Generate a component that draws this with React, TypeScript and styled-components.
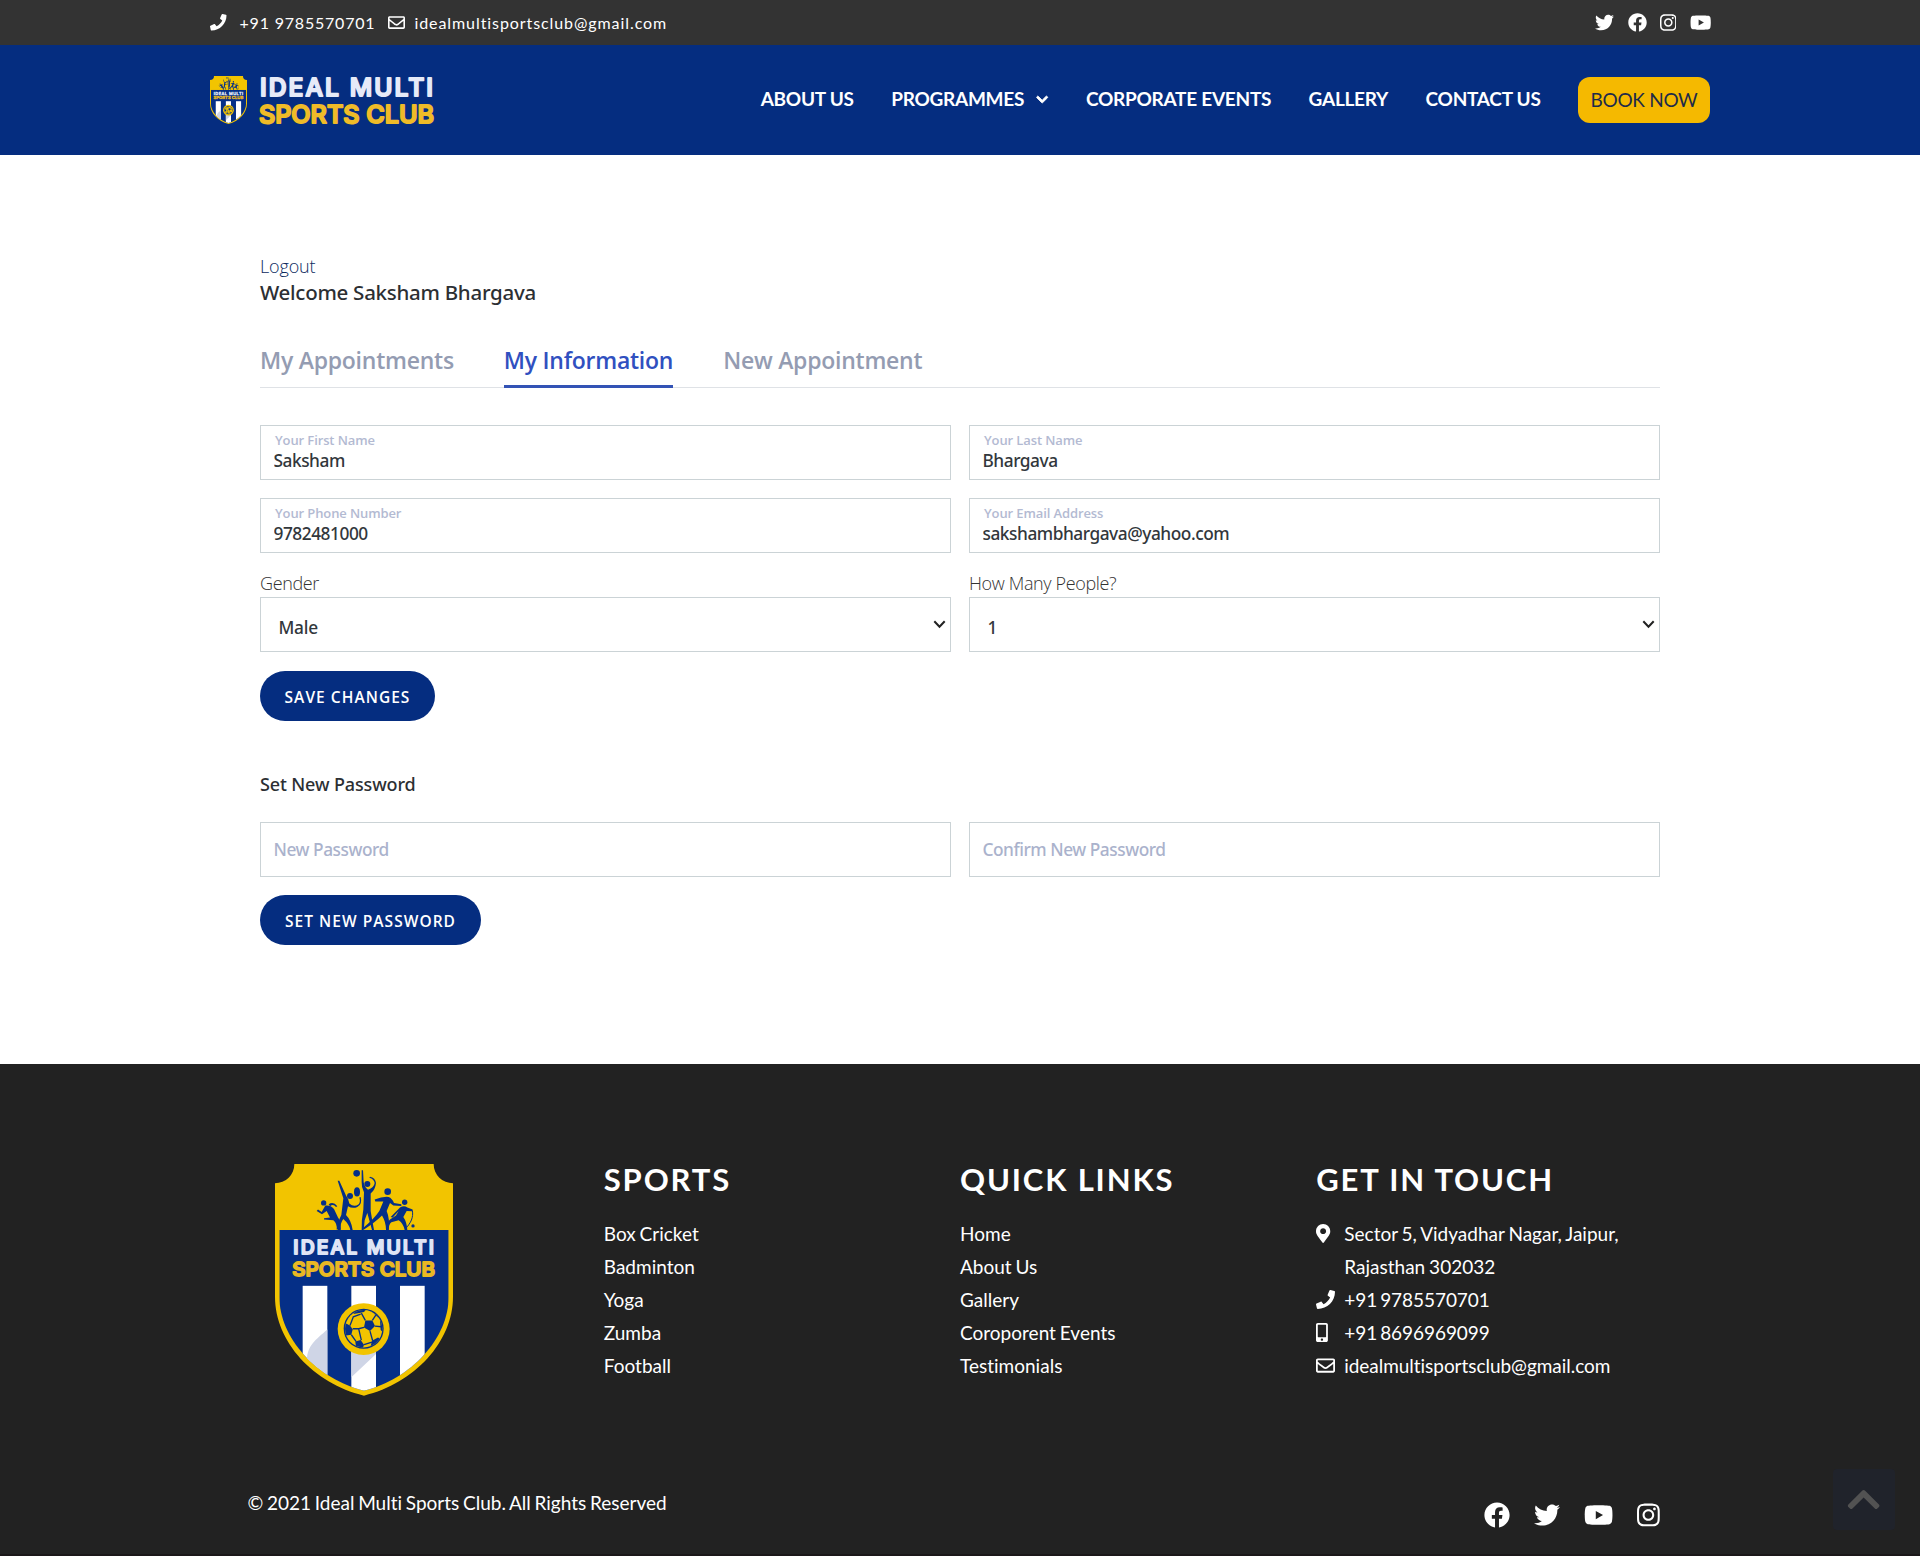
import React from "react";
import styled, { createGlobalStyle, css } from "styled-components";
import {
  FaChevronDown,
  FaChevronUp,
  FaFacebook,
  FaInstagram,
  FaMapMarkerAlt,
  FaMobileAlt,
  FaPhone,
  FaRegEnvelope,
  FaTwitter,
  FaYoutube,
} from "react-icons/fa";

const NAVY = "#052d80";
const GOLD = "#f5b900";
const LATO = `Lato, "Liberation Sans", sans-serif`;
const HUMANIST = `"Noto Sans", "Open Sans", sans-serif`;
const OPEN = `"Open Sans", "Noto Sans", sans-serif`;

const GlobalStyle = createGlobalStyle`
  *, *::before, *::after { box-sizing: border-box; }
  body { margin: 0; background: #fff; font-family: ${LATO}; }
  h2, h3, h4, p, ul { margin: 0; padding: 0; }
  ul { list-style: none; }
  a { color: inherit; text-decoration: none; }
`;

const Page = styled.div`
  width: 1920px;
  height: 1556px;
  overflow: hidden;
  position: relative;
  display: flex;
  flex-direction: column;
`;

/* $ratio is the glyph's width over its height; square when left out. */
const Icon = styled.span<{ $size: number; $ratio?: number }>`
  display: inline-flex;
  align-items: center;
  flex: none;
  svg {
    display: block;
    flex: none;
    width: ${(p) => p.$size * (p.$ratio ?? 1)}px;
    height: ${(p) => p.$size}px;
  }
`;

const NavChevron = styled(Icon)`
  path {
    stroke: currentColor;
    stroke-width: 34;
  }
`;

const TopBar = styled.div`
  height: 45px;
  background: #333;
  color: #fff;
`;

const Wide = styled.div`
  width: 1500px;
  height: 100%;
  margin: 0 auto;
  display: flex;
  align-items: center;
  justify-content: space-between;
`;

const TopContacts = styled.div`
  display: flex;
  align-items: center;
`;

const TopContact = styled.a<{ $gap: number; $tracking: number }>`
  display: flex;
  align-items: center;
  gap: ${(p) => p.$gap}px;
  margin-right: 13px;
  font-size: 16px;
  line-height: 24px;
  letter-spacing: ${(p) => p.$tracking}px;
`;

const Socials = styled.div<{ $gap: number }>`
  display: flex;
  align-items: center;
  gap: ${(p) => p.$gap}px;
  color: #fff;
`;

const TopSocials = styled(Socials)`
  margin-right: -1px;
`;

const Header = styled.header`
  height: 110px;
  background: ${NAVY};
  color: #fff;
`;

const Brand = styled.a`
  display: flex;
  align-items: center;
  gap: 10px;
`;

const Wordmark = styled.svg`
  display: block;
  overflow: visible;
`;

const Nav = styled.nav`
  display: flex;
  align-items: center;
  gap: 37.4px;
`;

const NavLink = styled.a`
  display: flex;
  align-items: center;
  gap: 12px;
  padding-bottom: 2px;
  font-size: 19px;
  font-weight: 700;
  line-height: 28px;
  letter-spacing: -0.26px;
`;

const BookButton = styled.a`
  display: flex;
  align-items: center;
  justify-content: center;
  width: 132px;
  height: 46px;
  padding-bottom: 1px;
  border-radius: 12px;
  background: ${GOLD};
  color: #1d2b4a;
  font-size: 19px;
  letter-spacing: -0.3px;
`;

const Main = styled.main`
  width: 1400px;
  height: 909px;
  margin: 0 auto;
  padding-top: 99px;
  display: flex;
  flex-direction: column;
  align-items: stretch;
  font-family: ${HUMANIST};
`;

const Logout = styled.a`
  align-self: flex-start;
  font-family: ${OPEN};
  font-size: 18px;
  font-weight: 300;
  line-height: 24px;
  letter-spacing: -0.15px;
  color: #0c2a5e;
`;

const Welcome = styled.h3`
  font-size: 20.5px;
  font-weight: 500;
  line-height: 28px;
  letter-spacing: -0.27px;
  color: #2c2f33;
`;

const Tabs = styled.div`
  display: flex;
  gap: 50px;
  margin-top: 38px;
  box-shadow: inset 0 -1px 0 #dfe2e6;
`;

const Tab = styled.a<{ $active?: boolean }>`
  padding-bottom: 9px;
  border-bottom: 3px solid ${(p) => (p.$active ? "#3353b5" : "transparent")};
  font-family: ${OPEN};
  font-size: 23px;
  font-weight: 600;
  line-height: 32px;
  letter-spacing: -0.25px;
  color: ${(p) => (p.$active ? "#3050c0" : "#949cb2")};
`;

const Row = styled.div<{ $top: number }>`
  display: grid;
  grid-template-columns: 1fr 1fr;
  column-gap: 18px;
  margin-top: ${(p) => p.$top}px;
`;

const box = css`
  height: 55px;
  border: 1px solid #cbd3d6;
  background: #fff;
`;

const Field = styled.label`
  ${box}
  display: flex;
  flex-direction: column;
  justify-content: center;
  padding: 0 12.5px;
`;

const FieldLabel = styled.span`
  margin: -2px 0 1px 1.5px;
  font-family: ${OPEN};
  font-size: 13px;
  font-weight: 600;
  line-height: 17px;
  letter-spacing: -0.11px;
  color: #b3bad2;
`;

const control = css`
  display: block;
  width: 100%;
  height: 22px;
  padding: 0;
  border: 0;
  outline: 0;
  background: transparent;
  font-family: ${HUMANIST};
  font-size: 17.3px;
  font-weight: 500;
  line-height: 22px;
  letter-spacing: -0.46px;
  color: #32373c;
`;

const Input = styled.input`
  ${control}
  &::placeholder {
    color: #aab2cc;
    opacity: 1;
  }
`;

const SelectGroup = styled.label`
  display: flex;
  flex-direction: column;
`;

const SelectLabel = styled.span`
  font-family: ${OPEN};
  font-size: 18px;
  font-weight: 300;
  line-height: 27px;
  letter-spacing: -0.36px;
  color: #333;
`;

const SelectBox = styled.span`
  ${box}
  display: flex;
  align-items: center;
  padding: 0 4.5px 0 17.5px;
`;

const Select = styled.select`
  ${control}
  appearance: none;
  flex: 1;
  margin-top: 7px;
  letter-spacing: -0.25px;
`;

const ChevronSlot = styled.span`
  display: flex;
`;

const Pill = styled.button<{ $width: number; $top: number }>`
  align-self: flex-start;
  width: ${(p) => p.$width}px;
  height: 50px;
  margin-top: ${(p) => p.$top}px;
  padding: 1px 0 0;
  border: 0;
  border-radius: 25px;
  background: ${NAVY};
  color: #fff;
  font-family: ${OPEN};
  font-size: 15.5px;
  font-weight: 600;
  letter-spacing: 1.04px;
`;

const SectionTitle = styled.h4`
  margin-top: 50px;
  font-size: 18px;
  font-weight: 500;
  line-height: 26px;
  letter-spacing: -0.13px;
  color: #2c2f33;
`;

const Footer = styled.footer`
  height: 492px;
  padding-top: 95px;
  background: #222;
  border-bottom: 2px solid #1b1819;
  color: #fff;
`;

const FooterColumns = styled.div`
  display: grid;
  grid-template-columns: repeat(4, 356.25px);
  width: 1425px;
  margin: 0 auto;
`;

const FooterLogo = styled.div`
  padding: 5px 0 0 27.5px;
`;

const FooterTitle = styled.h2`
  margin-bottom: 18px;
  font-size: 31px;
  font-weight: 700;
  line-height: 40px;
  letter-spacing: 1.85px;
`;

const footerText = css`
  font-size: 19px;
  line-height: 33px;
  letter-spacing: 0.01px;
  word-spacing: -1px;
`;

const FooterLink = styled.li`
  ${footerText}
`;

const ContactItem = styled.li<{ $tracking?: number; $word?: number }>`
  ${footerText}
  display: grid;
  grid-template-columns: 28px 290px;
  letter-spacing: ${(p) => p.$tracking ?? 0.01}px;
  word-spacing: ${(p) => p.$word ?? -1}px;
  ${Icon} {
    height: 33px;
  }
`;

const FooterBottom = styled.div`
  display: flex;
  justify-content: space-between;
  align-items: flex-start;
  width: 1425px;
  margin: 94px auto 0;
  padding-right: 13px;
`;

const Copyright = styled.p`
  ${footerText}
  line-height: 26px;
  word-spacing: -1.2px;
`;

const BottomSocials = styled.div`
  padding-top: 12px;
`;

const ScrollTop = styled.a`
  position: absolute;
  right: 25px;
  bottom: 26px;
  width: 62px;
  height: 61px;
  display: flex;
  align-items: center;
  justify-content: center;
  border-radius: 4px;
  background: #20232b;
  color: #525252;
`;

const BadgeSvg = styled.svg`
  display: block;
`;

type ClubNameProps = {
  x1: number;
  w1: number;
  y1: number;
  x2: number;
  w2: number;
  y2: number;
  size: number;
  stroke: number;
  light: string;
  gold: string;
};

function ClubName({ x1, w1, y1, x2, w2, y2, size, stroke, light, gold }: ClubNameProps) {
  return (
    <g
      fontFamily="Inter, sans-serif"
      fontWeight={500}
      fontSize={size}
      strokeWidth={stroke}
      strokeLinejoin="round"
      strokeLinecap="round"
    >
      <text x={x1} y={y1} textLength={w1} lengthAdjust="spacing" fill={light} stroke={light}>
        IDEAL MULTI
      </text>
      <text x={x2} y={y2} textLength={w2} lengthAdjust="spacingAndGlyphs" fill={gold} stroke={gold}>
        SPORTS CLUB
      </text>
    </g>
  );
}

function Badge({ id, width, height }: { id: string; width: number; height: number }) {
  return (
    <BadgeSvg width={width} height={height} viewBox="75 71 534 697" preserveAspectRatio="none">
      <defs>
        <clipPath id={`${id}-body`}>
          <path d="M88 269H596V470C596 595 482 718 342 752C202 718 88 595 88 470Z" />
        </clipPath>
        <clipPath id={`${id}-ball`}>
          <circle cx="341" cy="566" r="56" />
        </clipPath>
      </defs>
      <path
        fill="#f2c400"
        d="M133 71H551A58 58 0 0 0 609 129V470C609 605 494 730 342 767C190 730 75 605 75 470V129A58 58 0 0 0 133 71Z"
      />
      <g clipPath={`url(#${id}-body)`}>
        <rect x="75" y="268" width="534" height="500" fill="#052f87" />
        <g fill="#fff">
          <rect x="158" y="437" width="74" height="330" />
          <rect x="304" y="437" width="74" height="330" />
          <rect x="450" y="437" width="74" height="330" />
        </g>
        <path fill="#cfd5e6" d="M232 568C196 600 168 618 171 668L190 760H232ZM304 620H378V642L304 712Z" />
      </g>

      <g fill="#052f87">
        <path d="M226 196Q242 194 252 206L264 232Q272 240 272 268H260Q262 250 250 240L222 238V234L240 232L230 212L216 222L200 212L204 208L215 215Z" />
        <path d="M236 192Q250 182 262 198L258 200Q250 190 240 198Z" />
        <path d="M263 121H268L288 166Q296 176 298 190Q312 202 326 192Q332 186 328 172L332 170Q338 192 322 200Q308 206 294 198L288 224Q304 240 308 269H301Q298 252 280 236Q270 248 272 269H264Q262 246 274 224L280 174Z" />
        <path d="M335 90H339L341 126Q344 142 354 148Q372 142 374 128Q372 116 358 112L360 109Q376 112 378 128Q376 148 362 160L362 194Q360 212 366 236L372 269H366L352 218L344 240L341 269H335Q334 240 340 208L342 156Q334 140 335 126Z" />
        <path d="M374 178Q398 168 416 170Q426 174 432 188L454 192V197L430 196L420 188L410 212Q420 236 416 269H408Q408 246 396 226Q376 246 342 268L338 264Q372 236 388 212L400 184L376 184Z" />
        <path d="M450 202Q462 194 472 202L488 208L486 213L470 212L460 230Q470 244 472 269H464Q460 250 446 240L424 246Q416 252 416 269H409Q408 248 420 238L438 226L446 212L428 232L422 230Z" />
        <circle cx="221" cy="188" r="8" />
        <circle cx="300" cy="167" r="9" />
        <circle cx="320" cy="99" r="10" />
        <circle cx="352" cy="131" r="9" />
        <circle cx="413" cy="154" r="10" />
        <circle cx="464" cy="186" r="8" />
        <circle cx="489" cy="257" r="5" />
        <ellipse cx="321" cy="155" rx="9" ry="14" />
      </g>
      <path fill="none" stroke="#052f87" strokeWidth="3" d="M487 210C491 232 482 248 468 264" />

      <ClubName
        x1={130} w1={422} y1={342} x2={127} w2={428} y2={407}
        size={58} stroke={5.5} light="#dfe4f5" gold="#e9b823"
      />

      <circle cx="341" cy="567" r="78" fill="#f2c400" />
      <circle cx="341" cy="566" r="60" fill="#052f87" />
      <circle cx="341" cy="566" r="56" fill="#f2c400" />
      <g clipPath={`url(#${id}-ball)`}>
        <g fill="#052f87">
          <path d="M346 541L367 541L375 558L360 573L342 562Z" />
          <path d="M284 548L300 556L308 568L304 584L288 586L280 570Z" />
          <path d="M322 506L350 506L342 516L328 519L310 522Z" />
          <path d="M316 604L332 600L342 614L338 626L318 620Z" />
          <path d="M366 602L384 592L394 598L376 618L362 618Z" />
          <path d="M390 542L400 545L402 580L392 570Z" />
        </g>
        <path
          fill="none"
          stroke="#052f87"
          strokeWidth="4"
          d="M346 541L334 519M367 541L378 524L364 508M378 524L396 540M375 558L394 560M360 573L368 602M342 562L326 566L308 566M326 566L334 600M304 584L318 604M300 556L310 530L332 522M342 614L366 606"
        />
      </g>
    </BadgeSvg>
  );
}

function SelectChevron() {
  return (
    <svg width="13" height="9" viewBox="0 0 13 9" fill="none" stroke="#222" strokeWidth="2">
      <path d="M1.3 1.3L6.5 6.8L11.7 1.3" />
    </svg>
  );
}

function FloatingField({ label, value }: { label: string; value: string }) {
  return (
    <Field>
      <FieldLabel>{label}</FieldLabel>
      <Input defaultValue={value} />
    </Field>
  );
}

function SelectField({ label, value }: { label: string; value: string }) {
  return (
    <SelectGroup>
      <SelectLabel>{label}</SelectLabel>
      <SelectBox>
        <Select defaultValue={value}>
          <option>{value}</option>
        </Select>
        <ChevronSlot>
          <SelectChevron />
        </ChevronSlot>
      </SelectBox>
    </SelectGroup>
  );
}

const sports = ["Box Cricket", "Badminton", "Yoga", "Zumba", "Football"];
const quickLinks = ["Home", "About Us", "Gallery", "Coroporent Events", "Testimonials"];

export default function App() {
  return (
    <Page>
      <GlobalStyle />
      <TopBar>
        <Wide>
          <TopContacts>
            <TopContact $gap={13} $tracking={0.8}>
              <Icon $size={16.5}><FaPhone /></Icon>
              <span>+91 9785570701</span>
            </TopContact>
            <TopContact $gap={9} $tracking={0.92}>
              <Icon $size={17}><FaRegEnvelope /></Icon>
              <span>idealmultisportsclub@gmail.com</span>
            </TopContact>
          </TopContacts>
          <TopSocials $gap={13.2}>
            <Icon $size={19}><FaTwitter /></Icon>
            <Icon $size={19}><FaFacebook /></Icon>
            <Icon $size={19} $ratio={0.875}><FaInstagram /></Icon>
            <Icon $size={19} $ratio={1.125}><FaYoutube /></Icon>
          </TopSocials>
        </Wide>
      </TopBar>

      <Header>
        <Wide>
          <Brand>
            <Badge id="header" width={37} height={48} />
            <Wordmark width="180" height="60" viewBox="0 0 180 60">
              <ClubName
                x1={3} w1={173} y1={25.6} x2={2} w2={175} y2={52.6}
                size={24.6} stroke={2} light="#e6eaf8" gold="#efbb28"
              />
            </Wordmark>
          </Brand>
          <Nav>
            <NavLink>ABOUT US</NavLink>
            <NavLink>
              PROGRAMMES
              <NavChevron $size={13} $ratio={0.95}><FaChevronDown /></NavChevron>
            </NavLink>
            <NavLink>CORPORATE EVENTS</NavLink>
            <NavLink>GALLERY</NavLink>
            <NavLink>CONTACT US</NavLink>
            <BookButton>BOOK NOW</BookButton>
          </Nav>
        </Wide>
      </Header>

      <Main>
        <Logout>Logout</Logout>
        <Welcome>Welcome Saksham Bhargava</Welcome>
        <Tabs>
          <Tab>My Appointments</Tab>
          <Tab $active>My Information</Tab>
          <Tab>New Appointment</Tab>
        </Tabs>
        <Row $top={37}>
          <FloatingField label="Your First Name" value="Saksham" />
          <FloatingField label="Your Last Name" value="Bhargava" />
        </Row>
        <Row $top={18}>
          <FloatingField label="Your Phone Number" value="9782481000" />
          <FloatingField label="Your Email Address" value="sakshambhargava@yahoo.com" />
        </Row>
        <Row $top={17}>
          <SelectField label="Gender" value="Male" />
          <SelectField label="How Many People?" value="1" />
        </Row>
        <Pill $width={175} $top={19}>SAVE CHANGES</Pill>
        <SectionTitle>Set New Password</SectionTitle>
        <Row $top={25}>
          <Field><Input placeholder="New Password" /></Field>
          <Field><Input placeholder="Confirm New Password" /></Field>
        </Row>
        <Pill $width={221} $top={18}>SET NEW PASSWORD</Pill>
      </Main>

      <Footer>
        <FooterColumns>
          <FooterLogo>
            <Badge id="footer" width={178} height={232} />
          </FooterLogo>
          <div>
            <FooterTitle>SPORTS</FooterTitle>
            <ul>{sports.map((s) => <FooterLink key={s}>{s}</FooterLink>)}</ul>
          </div>
          <div>
            <FooterTitle>QUICK LINKS</FooterTitle>
            <ul>{quickLinks.map((s) => <FooterLink key={s}>{s}</FooterLink>)}</ul>
          </div>
          <div>
            <FooterTitle>GET IN TOUCH</FooterTitle>
            <ul>
              <ContactItem>
                <Icon $size={19} $ratio={0.75}><FaMapMarkerAlt /></Icon>
                <span>Sector 5, Vidyadhar Nagar, Jaipur,<br />Rajasthan 302032</span>
              </ContactItem>
              <ContactItem $tracking={-0.06} $word={-1.8}>
                <Icon $size={19}><FaPhone /></Icon>
                <span>+91 9785570701</span>
              </ContactItem>
              <ContactItem $tracking={-0.06} $word={-1.8}>
                <Icon $size={19} $ratio={0.625}><FaMobileAlt /></Icon>
                <span>+91 8696969099</span>
              </ContactItem>
              <ContactItem $tracking={-0.04}>
                <Icon $size={19}><FaRegEnvelope /></Icon>
                <span>idealmultisportsclub@gmail.com</span>
              </ContactItem>
            </ul>
          </div>
        </FooterColumns>
        <FooterBottom>
          <Copyright>© 2021 Ideal Multi Sports Club. All Rights Reserved</Copyright>
          <BottomSocials>
            <Socials $gap={24}>
              <Icon $size={26}><FaFacebook /></Icon>
              <Icon $size={26}><FaTwitter /></Icon>
              <Icon $size={26} $ratio={1.125}><FaYoutube /></Icon>
              <Icon $size={26} $ratio={0.875}><FaInstagram /></Icon>
            </Socials>
          </BottomSocials>
        </FooterBottom>
      </Footer>

      <ScrollTop>
        <Icon $size={37} $ratio={0.9}><FaChevronUp /></Icon>
      </ScrollTop>
    </Page>
  );
}
